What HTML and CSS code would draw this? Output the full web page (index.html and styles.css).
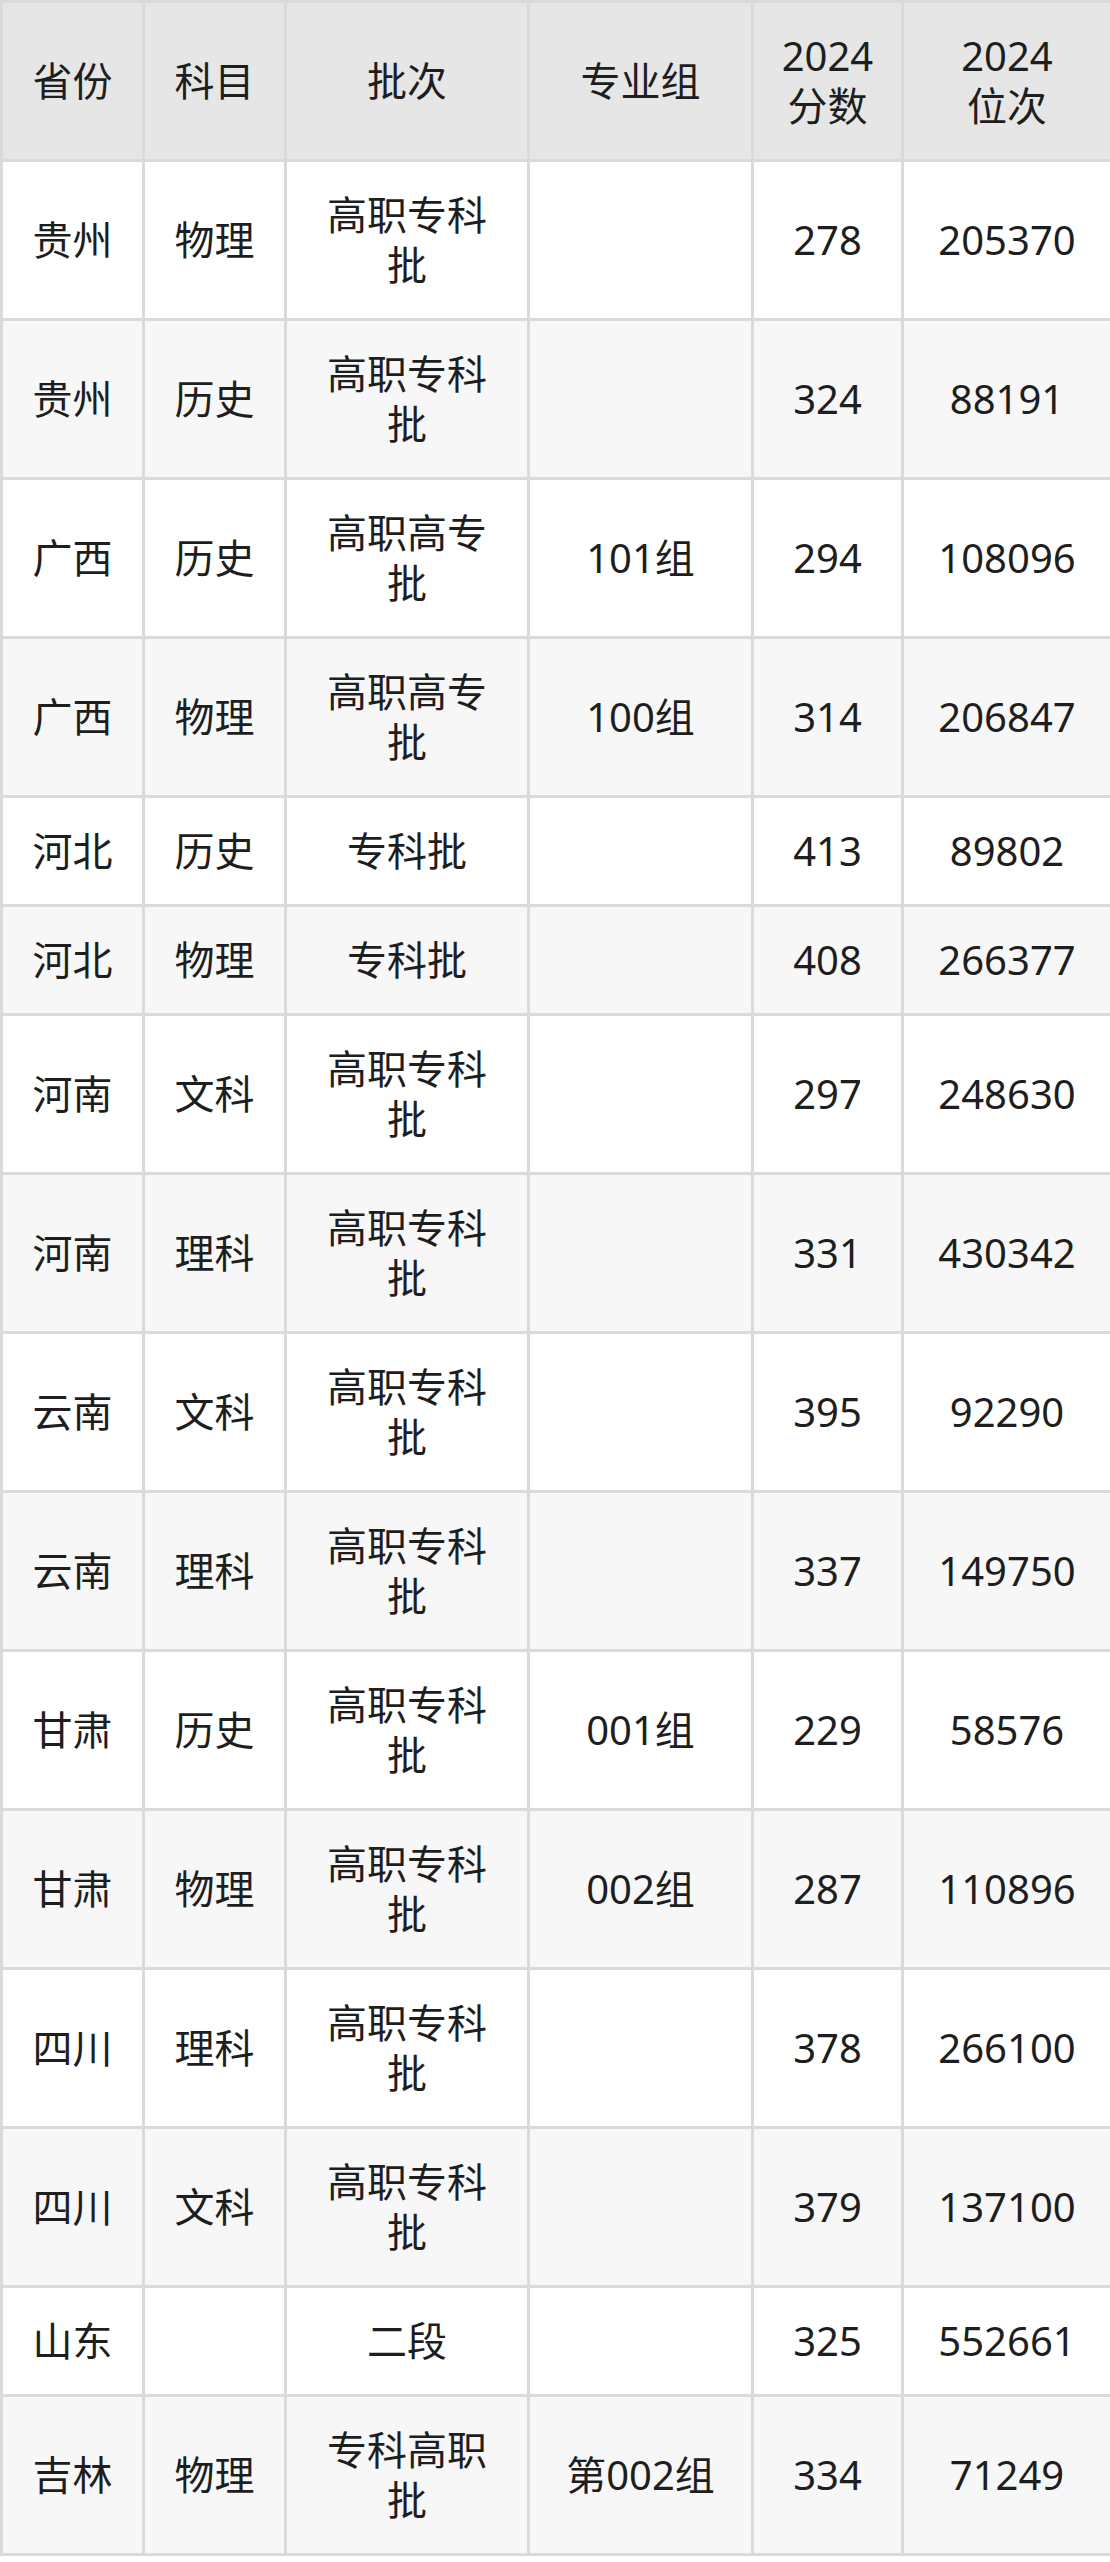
FILE: index.html
```html
<!DOCTYPE html>
<html lang="zh-CN">
<head>
<meta charset="utf-8">
<title>2024 分数位次</title>
<link rel="stylesheet" href="styles.css">
</head>
<body>
<table class="score-table">
  <colgroup>
    <col class="c-prov">
    <col class="c-subj">
    <col class="c-batch">
    <col class="c-group">
    <col class="c-score">
    <col class="c-rank">
  </colgroup>
  <thead>
    <tr>
      <th>省份</th><th>科目</th><th>批次</th><th>专业组</th><th>2024<br>分数</th><th>2024<br>位次</th>
    </tr>
  </thead>
  <tbody>
    <tr><td>贵州</td><td>物理</td><td>高职专科批</td><td></td><td>278</td><td>205370</td></tr>
    <tr><td>贵州</td><td>历史</td><td>高职专科批</td><td></td><td>324</td><td>88191</td></tr>
    <tr><td>广西</td><td>历史</td><td>高职高专批</td><td>101组</td><td>294</td><td>108096</td></tr>
    <tr><td>广西</td><td>物理</td><td>高职高专批</td><td>100组</td><td>314</td><td>206847</td></tr>
    <tr><td>河北</td><td>历史</td><td>专科批</td><td></td><td>413</td><td>89802</td></tr>
    <tr><td>河北</td><td>物理</td><td>专科批</td><td></td><td>408</td><td>266377</td></tr>
    <tr><td>河南</td><td>文科</td><td>高职专科批</td><td></td><td>297</td><td>248630</td></tr>
    <tr><td>河南</td><td>理科</td><td>高职专科批</td><td></td><td>331</td><td>430342</td></tr>
    <tr><td>云南</td><td>文科</td><td>高职专科批</td><td></td><td>395</td><td>92290</td></tr>
    <tr><td>云南</td><td>理科</td><td>高职专科批</td><td></td><td>337</td><td>149750</td></tr>
    <tr><td>甘肃</td><td>历史</td><td>高职专科批</td><td>001组</td><td>229</td><td>58576</td></tr>
    <tr><td>甘肃</td><td>物理</td><td>高职专科批</td><td>002组</td><td>287</td><td>110896</td></tr>
    <tr><td>四川</td><td>理科</td><td>高职专科批</td><td></td><td>378</td><td>266100</td></tr>
    <tr><td>四川</td><td>文科</td><td>高职专科批</td><td></td><td>379</td><td>137100</td></tr>
    <tr><td>山东</td><td></td><td>二段</td><td></td><td>325</td><td>552661</td></tr>
    <tr><td>吉林</td><td>物理</td><td>专科高职批</td><td>第002组</td><td>334</td><td>71249</td></tr>
  </tbody>
</table>
</body>
</html>
```
FILE: styles.css
```css
html, body {
  margin: 0;
  padding: 0;
  background: #ffffff;
}

.score-table {
  width: 1110px;
  table-layout: fixed;
  border-collapse: collapse;
  font-family: "Noto Sans", "Noto Sans CJK SC", sans-serif;
  font-size: 40px;
  line-height: 50px;
  color: #1e1e1e;
}

.c-prov { width: 142px; }
.c-subj { width: 142px; }
.c-batch { width: 243px; }
.c-group { width: 224px; }
.c-score { width: 150px; }
.c-rank { width: 209px; }

.score-table th,
.score-table td {
  border: 3px solid #dadada;
  padding: 28px 24px;
  text-align: center;
  vertical-align: middle;
  font-weight: normal;
}

.score-table thead th {
  background: #e6e6e6;
}

.score-table tbody tr:nth-child(even) td {
  background: #f7f7f7;
}
```
